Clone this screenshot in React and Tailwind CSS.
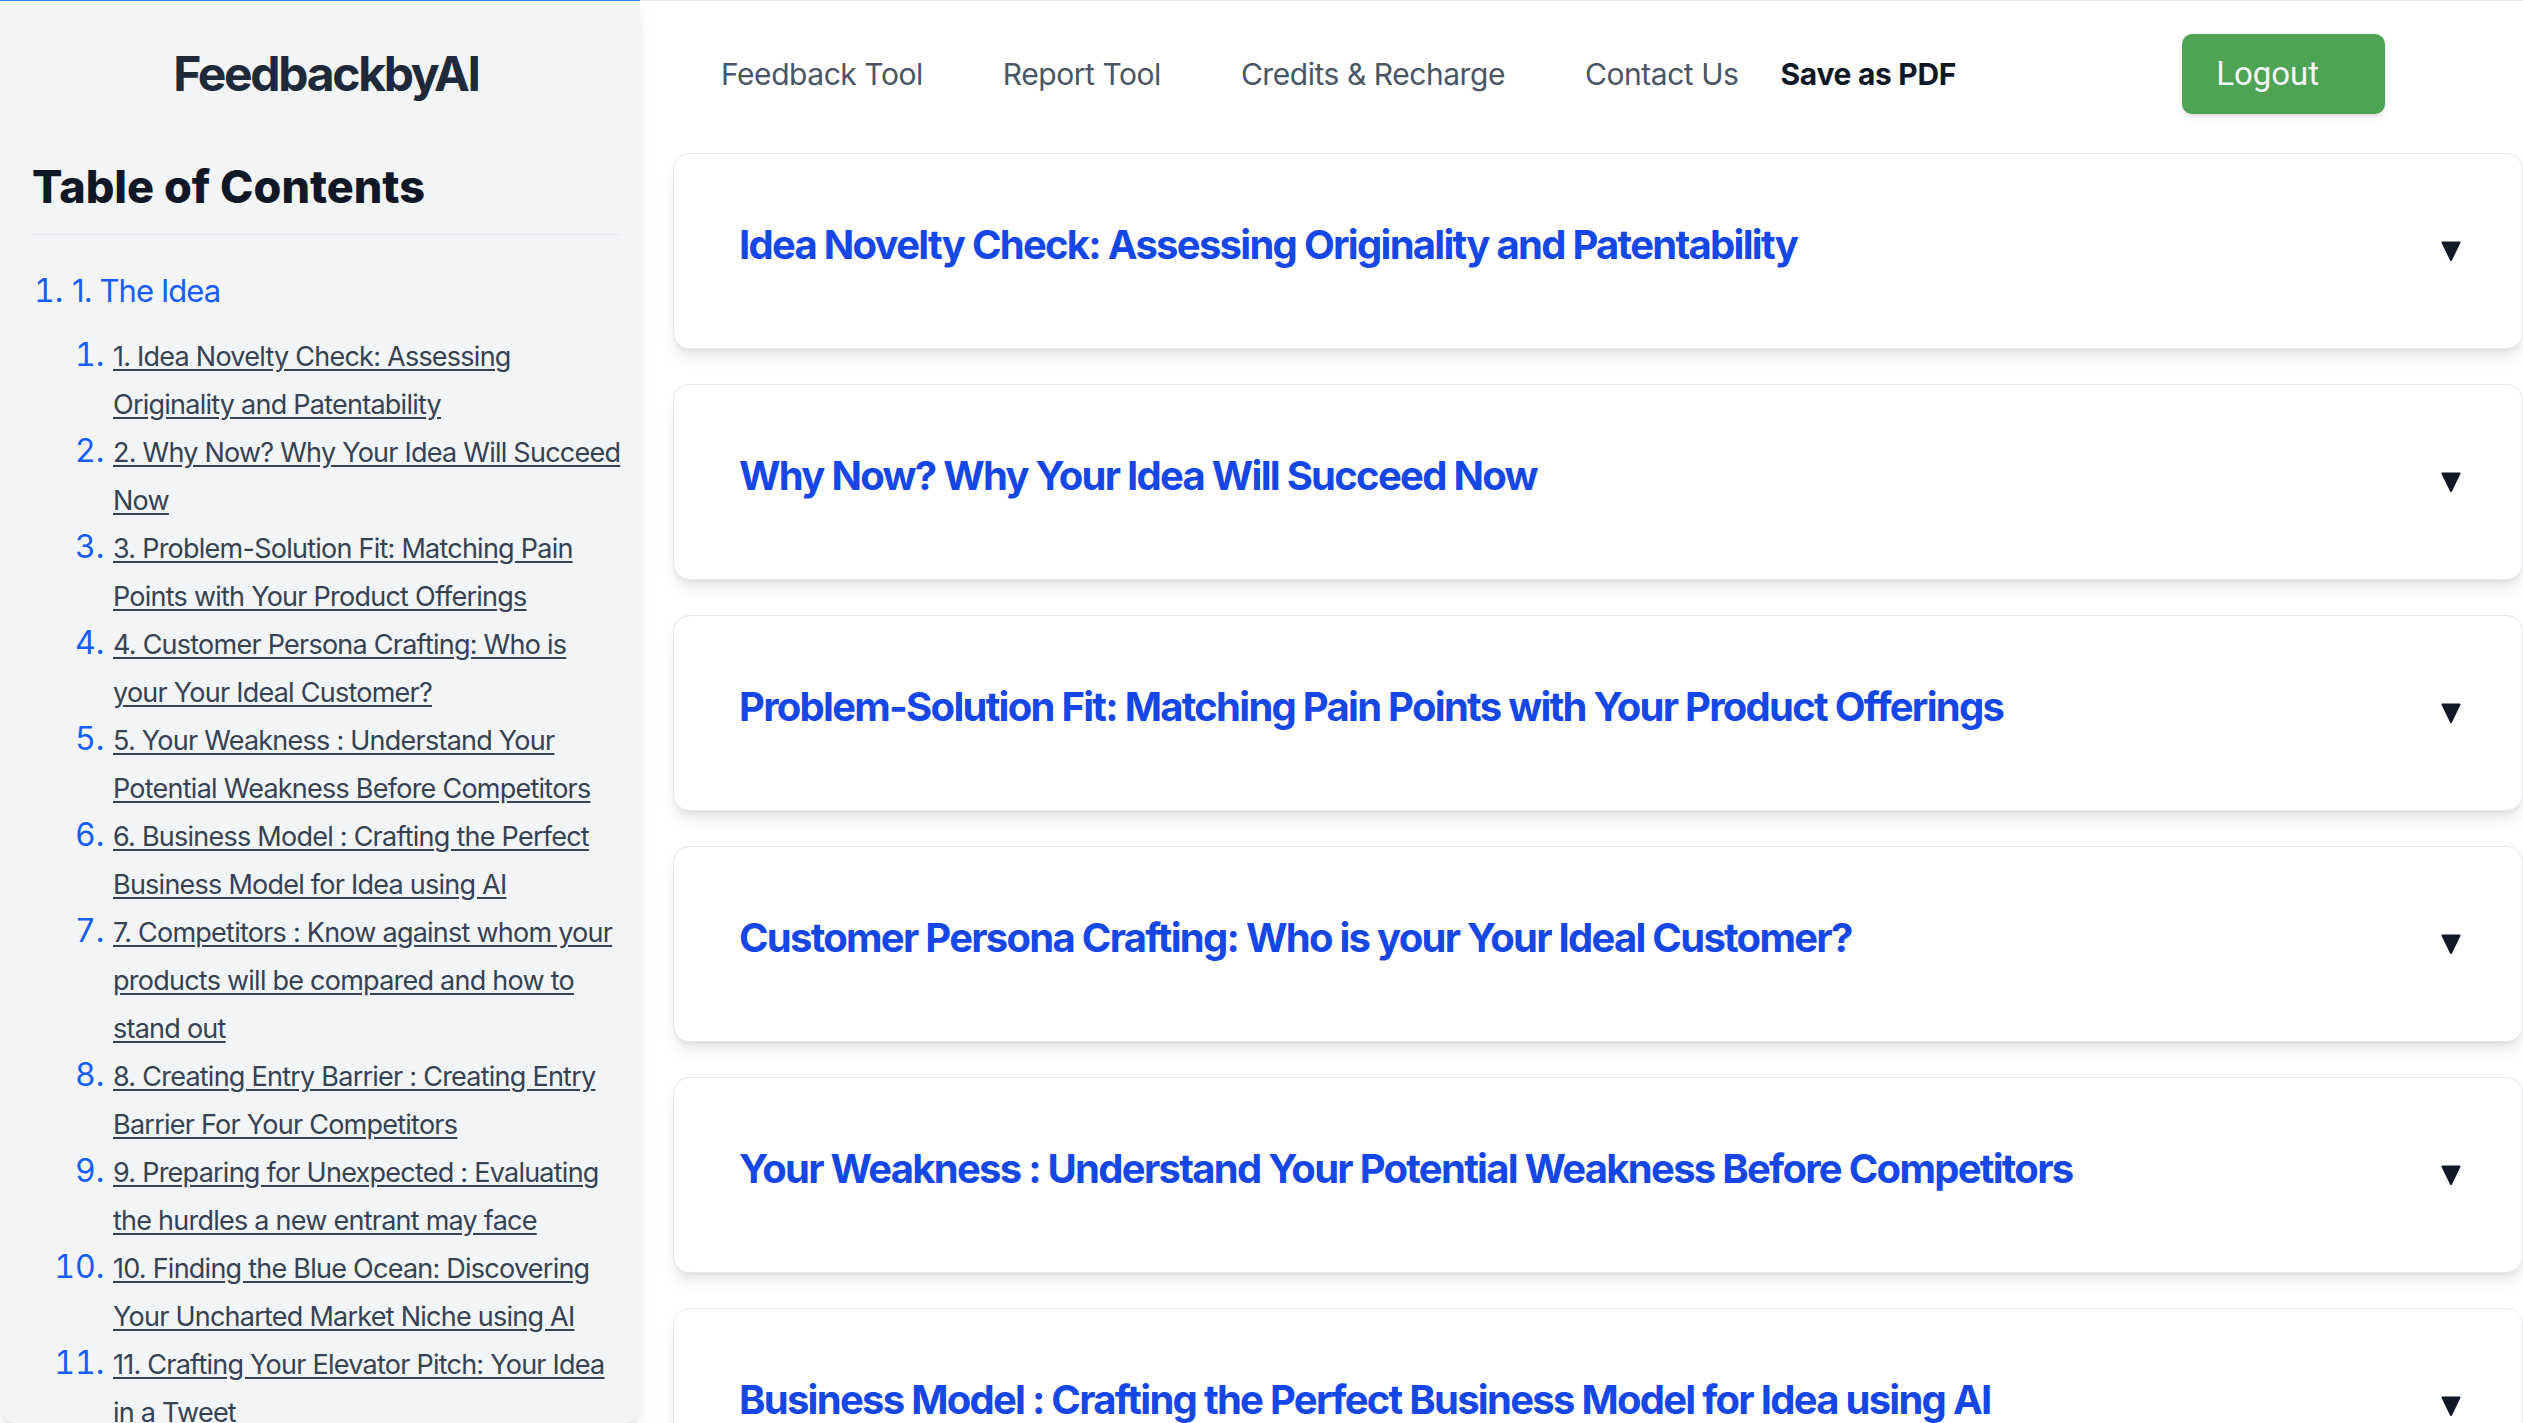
import React from "react";

const toc = [
  ["1. Idea Novelty Check: Assessing", "Originality and Patentability"],
  ["2. Why Now? Why Your Idea Will Succeed", "Now"],
  ["3. Problem-Solution Fit: Matching Pain", "Points with Your Product Offerings"],
  ["4. Customer Persona Crafting: Who is", "your Your Ideal Customer?"],
  ["5. Your Weakness : Understand Your", "Potential Weakness Before Competitors"],
  ["6. Business Model : Crafting the Perfect", "Business Model for Idea using AI"],
  ["7. Competitors : Know against whom your", "products will be compared and how to", "stand out"],
  ["8. Creating Entry Barrier : Creating Entry", "Barrier For Your Competitors"],
  ["9. Preparing for Unexpected : Evaluating", "the hurdles a new entrant may face"],
  ["10. Finding the Blue Ocean: Discovering", "Your Uncharted Market Niche using AI"],
  ["11. Crafting Your Elevator Pitch: Your Idea", "in a Tweet"],
];

const cards = [
  "Idea Novelty Check: Assessing Originality and Patentability",
  "Why Now? Why Your Idea Will Succeed Now",
  "Problem-Solution Fit: Matching Pain Points with Your Product Offerings",
  "Customer Persona Crafting: Who is your Your Ideal Customer?",
  "Your Weakness : Understand Your Potential Weakness Before Competitors",
  "Business Model : Crafting the Perfect Business Model for Idea using AI",
  "Competitors : Know against whom your products will be compared and how to stand out",
  "Creating Entry Barrier : Creating Entry Barrier For Your Competitors",
];

function Arrow() {
  return (
    <svg width="20" height="20" viewBox="0 0 20 20" className="shrink-0">
      <path d="M1.5 1.5 H18.5 L10 19 Z" fill="#111827" stroke="#111827" strokeWidth="2" strokeLinejoin="round" />
    </svg>
  );
}

export default function App() {
  return (
    <div
      className="flex h-screen w-full overflow-hidden bg-white"
      style={{ fontFamily: "Inter, 'Noto Sans', sans-serif" }}
    >
      <aside className="relative z-10 h-screen w-[640px] shrink-0 overflow-hidden rounded-b-2xl border-t border-blue-500 bg-gray-100 pl-8 pr-5 shadow-lg">
        <h1 className="pt-[49px] text-center text-[48px] font-bold leading-none tracking-[-0.048em] text-gray-800">
          FeedbackbyAI
        </h1>
        <h2 className="mt-[66px] text-[45px] font-extrabold leading-none text-gray-900">
          Table of Contents
        </h2>
        <div className="mt-[25px] h-px bg-gray-200" />
        <ol className="mt-[32px] list-decimal pl-[40px] text-[32px] leading-[48px] text-blue-600">
          <li>
            <span className="text-[31px] leading-none tracking-[-0.03em]">1. The Idea</span>
            <ol className="mt-4 list-decimal pl-[41px]">
              {toc.map((lines, i) => (
                <li key={i}>
                  <a
                    href="#"
                    className="text-[27px] leading-none tracking-[-0.028em] text-gray-700 underline underline-offset-[3px]"
                  >
                    {lines.map((l, j) => (
                      <React.Fragment key={j}>
                        <span className="whitespace-nowrap">{l}</span>
                        {j < lines.length - 1 && <br />}
                      </React.Fragment>
                    ))}
                  </a>
                </li>
              ))}
            </ol>
          </li>
        </ol>
      </aside>

      <main className="min-w-0 flex-1 overflow-hidden border-t border-gray-200">
        <header className="flex h-[152px] items-center pb-[6px] pl-[81px]">
          <nav className="flex items-center text-[30px] tracking-[-0.015em] text-gray-600">
            <a href="#" className="mr-[80px]">Feedback Tool</a>
            <a href="#" className="mr-[80px]">Report Tool</a>
            <a href="#" className="mr-[80px]">Credits &amp; Recharge</a>
            <a href="#" className="mr-[42px]">Contact Us</a>
            <button className="font-bold tracking-[-0.01em] text-gray-900">Save as PDF</button>
          </nav>
          <button
            className="ml-[226px] h-[80px] w-[203px] rounded-[10px] bg-[#4ea454] pl-[34px] text-left text-[33px] text-gray-100 shadow-md"
            style={{ fontFamily: "Roboto, sans-serif" }}
          >
            Logout
          </button>
        </header>

        <div className="flex flex-col gap-[35px] pl-[33px]">
          {cards.map((t, i) => (
            <div
              key={i}
              className="flex h-[196px] shrink-0 items-center justify-between rounded-2xl border border-gray-200 bg-white pl-[65px] pr-[61px] shadow-lg"
            >
              <h3 className="mb-[12px] whitespace-nowrap text-[40px] font-bold tracking-[-0.043em] text-blue-700">{t}</h3>
              <Arrow />
            </div>
          ))}
        </div>
      </main>
    </div>
  );
}
